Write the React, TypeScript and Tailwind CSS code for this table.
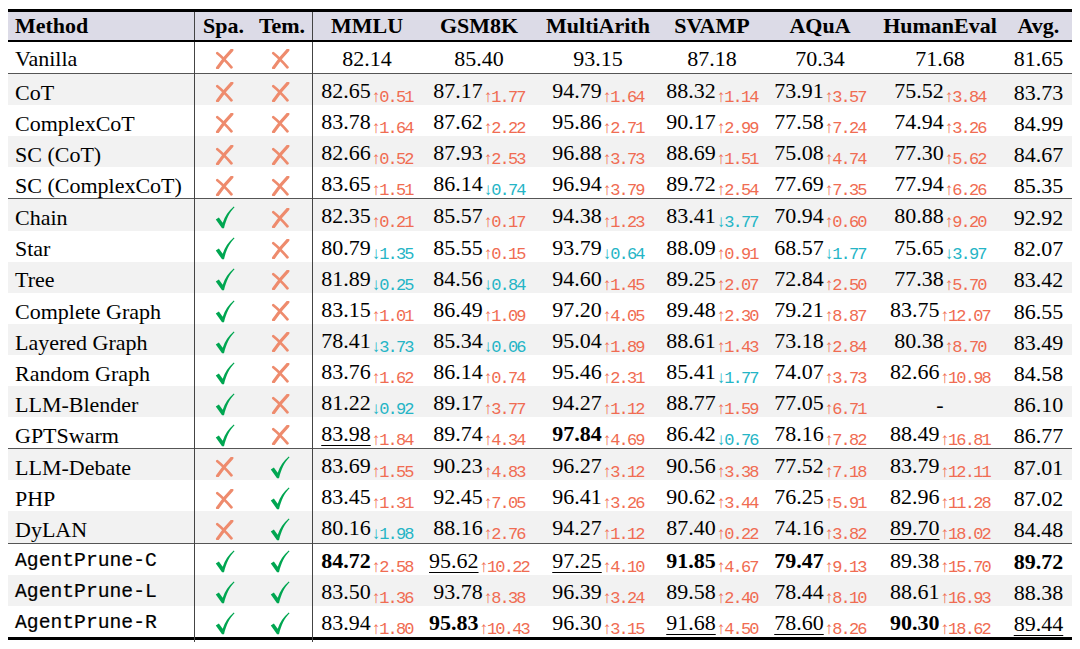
import React from 'react';

// cells: "*" prefix = bold, "_" prefix = underline, "+x"/"-x" after "|" = delta up/down
interface Row {
  name: string;
  mono?: boolean;
  spa: boolean;
  tem: boolean;
  cells: string[];
  avg: string;
  sep?: boolean;
}

const rows: Row[] = [
  { name: 'Vanilla', spa: false, tem: false, cells: ['82.14', '85.40', '93.15', '87.18', '70.34', '71.68'], avg: '81.65' },
  { name: 'CoT', spa: false, tem: false, sep: true, cells: ['82.65|+0.51', '87.17|+1.77', '94.79|+1.64', '88.32|+1.14', '73.91|+3.57', '75.52|+3.84'], avg: '83.73' },
  { name: 'ComplexCoT', spa: false, tem: false, cells: ['83.78|+1.64', '87.62|+2.22', '95.86|+2.71', '90.17|+2.99', '77.58|+7.24', '74.94|+3.26'], avg: '84.99' },
  { name: 'SC (CoT)', spa: false, tem: false, cells: ['82.66|+0.52', '87.93|+2.53', '96.88|+3.73', '88.69|+1.51', '75.08|+4.74', '77.30|+5.62'], avg: '84.67' },
  { name: 'SC (ComplexCoT)', spa: false, tem: false, cells: ['83.65|+1.51', '86.14|-0.74', '96.94|+3.79', '89.72|+2.54', '77.69|+7.35', '77.94|+6.26'], avg: '85.35' },
  { name: 'Chain', spa: true, tem: false, sep: true, cells: ['82.35|+0.21', '85.57|+0.17', '94.38|+1.23', '83.41|-3.77', '70.94|+0.60', '80.88|+9.20'], avg: '92.92' },
  { name: 'Star', spa: true, tem: false, cells: ['80.79|-1.35', '85.55|+0.15', '93.79|-0.64', '88.09|+0.91', '68.57|-1.77', '75.65|-3.97'], avg: '82.07' },
  { name: 'Tree', spa: true, tem: false, cells: ['81.89|-0.25', '84.56|-0.84', '94.60|+1.45', '89.25|+2.07', '72.84|+2.50', '77.38|+5.70'], avg: '83.42' },
  { name: 'Complete Graph', spa: true, tem: false, cells: ['83.15|+1.01', '86.49|+1.09', '97.20|+4.05', '89.48|+2.30', '79.21|+8.87', '83.75|+12.07'], avg: '86.55' },
  { name: 'Layered Graph', spa: true, tem: false, cells: ['78.41|-3.73', '85.34|-0.06', '95.04|+1.89', '88.61|+1.43', '73.18|+2.84', '80.38|+8.70'], avg: '83.49' },
  { name: 'Random Graph', spa: true, tem: false, cells: ['83.76|+1.62', '86.14|+0.74', '95.46|+2.31', '85.41|-1.77', '74.07|+3.73', '82.66|+10.98'], avg: '84.58' },
  { name: 'LLM-Blender', spa: true, tem: false, cells: ['81.22|-0.92', '89.17|+3.77', '94.27|+1.12', '88.77|+1.59', '77.05|+6.71', '-'], avg: '86.10' },
  { name: 'GPTSwarm', spa: true, tem: false, cells: ['_83.98|+1.84', '89.74|+4.34', '*97.84|+4.69', '86.42|-0.76', '78.16|+7.82', '88.49|+16.81'], avg: '86.77' },
  { name: 'LLM-Debate', spa: false, tem: true, sep: true, cells: ['83.69|+1.55', '90.23|+4.83', '96.27|+3.12', '90.56|+3.38', '77.52|+7.18', '83.79|+12.11'], avg: '87.01' },
  { name: 'PHP', spa: false, tem: true, cells: ['83.45|+1.31', '92.45|+7.05', '96.41|+3.26', '90.62|+3.44', '76.25|+5.91', '82.96|+11.28'], avg: '87.02' },
  { name: 'DyLAN', spa: false, tem: true, cells: ['80.16|-1.98', '88.16|+2.76', '94.27|+1.12', '87.40|+0.22', '74.16|+3.82', '_89.70|+18.02'], avg: '84.48' },
  { name: 'AgentPrune-C', mono: true, spa: true, tem: true, sep: true, cells: ['*84.72|+2.58', '_95.62|+10.22', '_97.25|+4.10', '*91.85|+4.67', '*79.47|+9.13', '89.38|+15.70'], avg: '*89.72' },
  { name: 'AgentPrune-L', mono: true, spa: true, tem: true, cells: ['83.50|+1.36', '93.78|+8.38', '96.39|+3.24', '89.58|+2.40', '78.44|+8.10', '88.61|+16.93'], avg: '88.38' },
  { name: 'AgentPrune-R', mono: true, spa: true, tem: true, cells: ['83.94|+1.80', '*95.83|+10.43', '96.30|+3.15', '_91.68|+4.50', '_78.60|+8.26', '*90.30|+18.62'], avg: '_89.44' },
];

const grid = 'grid grid-cols-[187px_57px_61px_108px_116px_122px_106px_110px_130px_67px]';

function Check() {
  return (
    <svg width="20" height="23" viewBox="0 0 18 21">
      <path
        d="M0.6 12.4 L3.4 10.6 L6.9 15.2 C8.9 9.4 12.2 4.2 17 0.4 L17.7 1.2 C13.2 5.8 10.2 11.6 8.1 20.4 L6.3 20.4 Z"
        fill="#00a651"
      />
    </svg>
  );
}

function Cross() {
  return (
    <svg width="19" height="20" viewBox="0 0 18 19">
      <path d="M16 1 C11.5 5.5 7 11 2.4 18" stroke="#ee8b6d" strokeWidth="3" strokeLinecap="round" fill="none" />
      <path d="M2.2 4 C6 7 10.5 11.5 15.6 17.4" stroke="#ee8b6d" strokeWidth="2.6" strokeLinecap="round" fill="none" />
    </svg>
  );
}

function Value({ text }: { text: string }) {
  let [main, delta] = text.split('|');
  let bold = false;
  let under = false;
  if (main.startsWith('*')) {
    bold = true;
    main = main.slice(1);
  }
  if (main.startsWith('_')) {
    under = true;
    main = main.slice(1);
  }
  return (
    <div className="flex items-center justify-center">
      <span className="whitespace-nowrap">
        <span
          className={
            (bold ? 'font-bold ' : '') +
            (under ? 'underline decoration-1 underline-offset-[4px] ' : '')
          }
        >
          {main}
        </span>
        {delta && (
          <span
            className={
              "font-['Liberation_Mono',monospace] text-[17px] tracking-[-1.8px] align-[-4px] " +
              (delta[0] === '+' ? 'text-[#f06c52]' : 'text-[#25b5c6]')
            }
          >
            {delta[0] === '+' ? '↑' : '↓'}
            {delta.slice(1)}
          </span>
        )}
      </span>
    </div>
  );
}

export default function App() {
  return (
    <div className="w-[1080px] h-[649px] bg-white pt-[9px] pl-[8px] font-['Liberation_Serif',serif] text-[22px] text-black">
      <div className="w-[1064px] border-t-[3px] border-b-[3px] border-black">
        {/* Header */}
        <div className={grid + ' h-[30px] bg-[#dcdbe7] border-b-2 border-black font-bold items-center leading-none'}>
          <div className="pl-[7px] h-full flex items-center border-r border-[#444]">Method</div>
          <div className="text-center">Spa.</div>
          <div className="text-center h-full flex items-center justify-center border-r border-[#444]">Tem.</div>
          <div className="text-center">MMLU</div>
          <div className="text-center">GSM8K</div>
          <div className="text-center">MultiArith</div>
          <div className="text-center">SVAMP</div>
          <div className="text-center">AQuA</div>
          <div className="text-center">HumanEval</div>
          <div className="text-center">Avg.</div>
        </div>

        {/* Body */}
        {rows.map((r, i) => (
          <div
            key={r.name}
            className={
              grid +
              (r.sep ? ' h-[32.1px] border-t border-[#555]' : ' h-[31.1px]') +
              (i % 2 === 1 ? ' bg-[#f2f2f2]' : ' bg-white')
            }
          >
            <div
              className={
                'pl-[7px] flex items-center border-r border-[#444] whitespace-nowrap ' +
                (r.mono ? "font-['Liberation_Mono',monospace] text-[19.7px] [-webkit-text-stroke:0.2px_black]" : '')
              }
            >
              {r.name}
            </div>
            <div className="flex items-center justify-center pl-[2px]">{r.spa ? <Check /> : <Cross />}</div>
            <div className="flex items-center justify-center border-r border-[#444] pr-[4px]">
              {r.tem ? <Check /> : <Cross />}
            </div>
            {r.cells.map((c, j) => (
              <Value key={j} text={c} />
            ))}
            <Value text={r.avg} />
          </div>
        ))}
      </div>
    </div>
  );
}
